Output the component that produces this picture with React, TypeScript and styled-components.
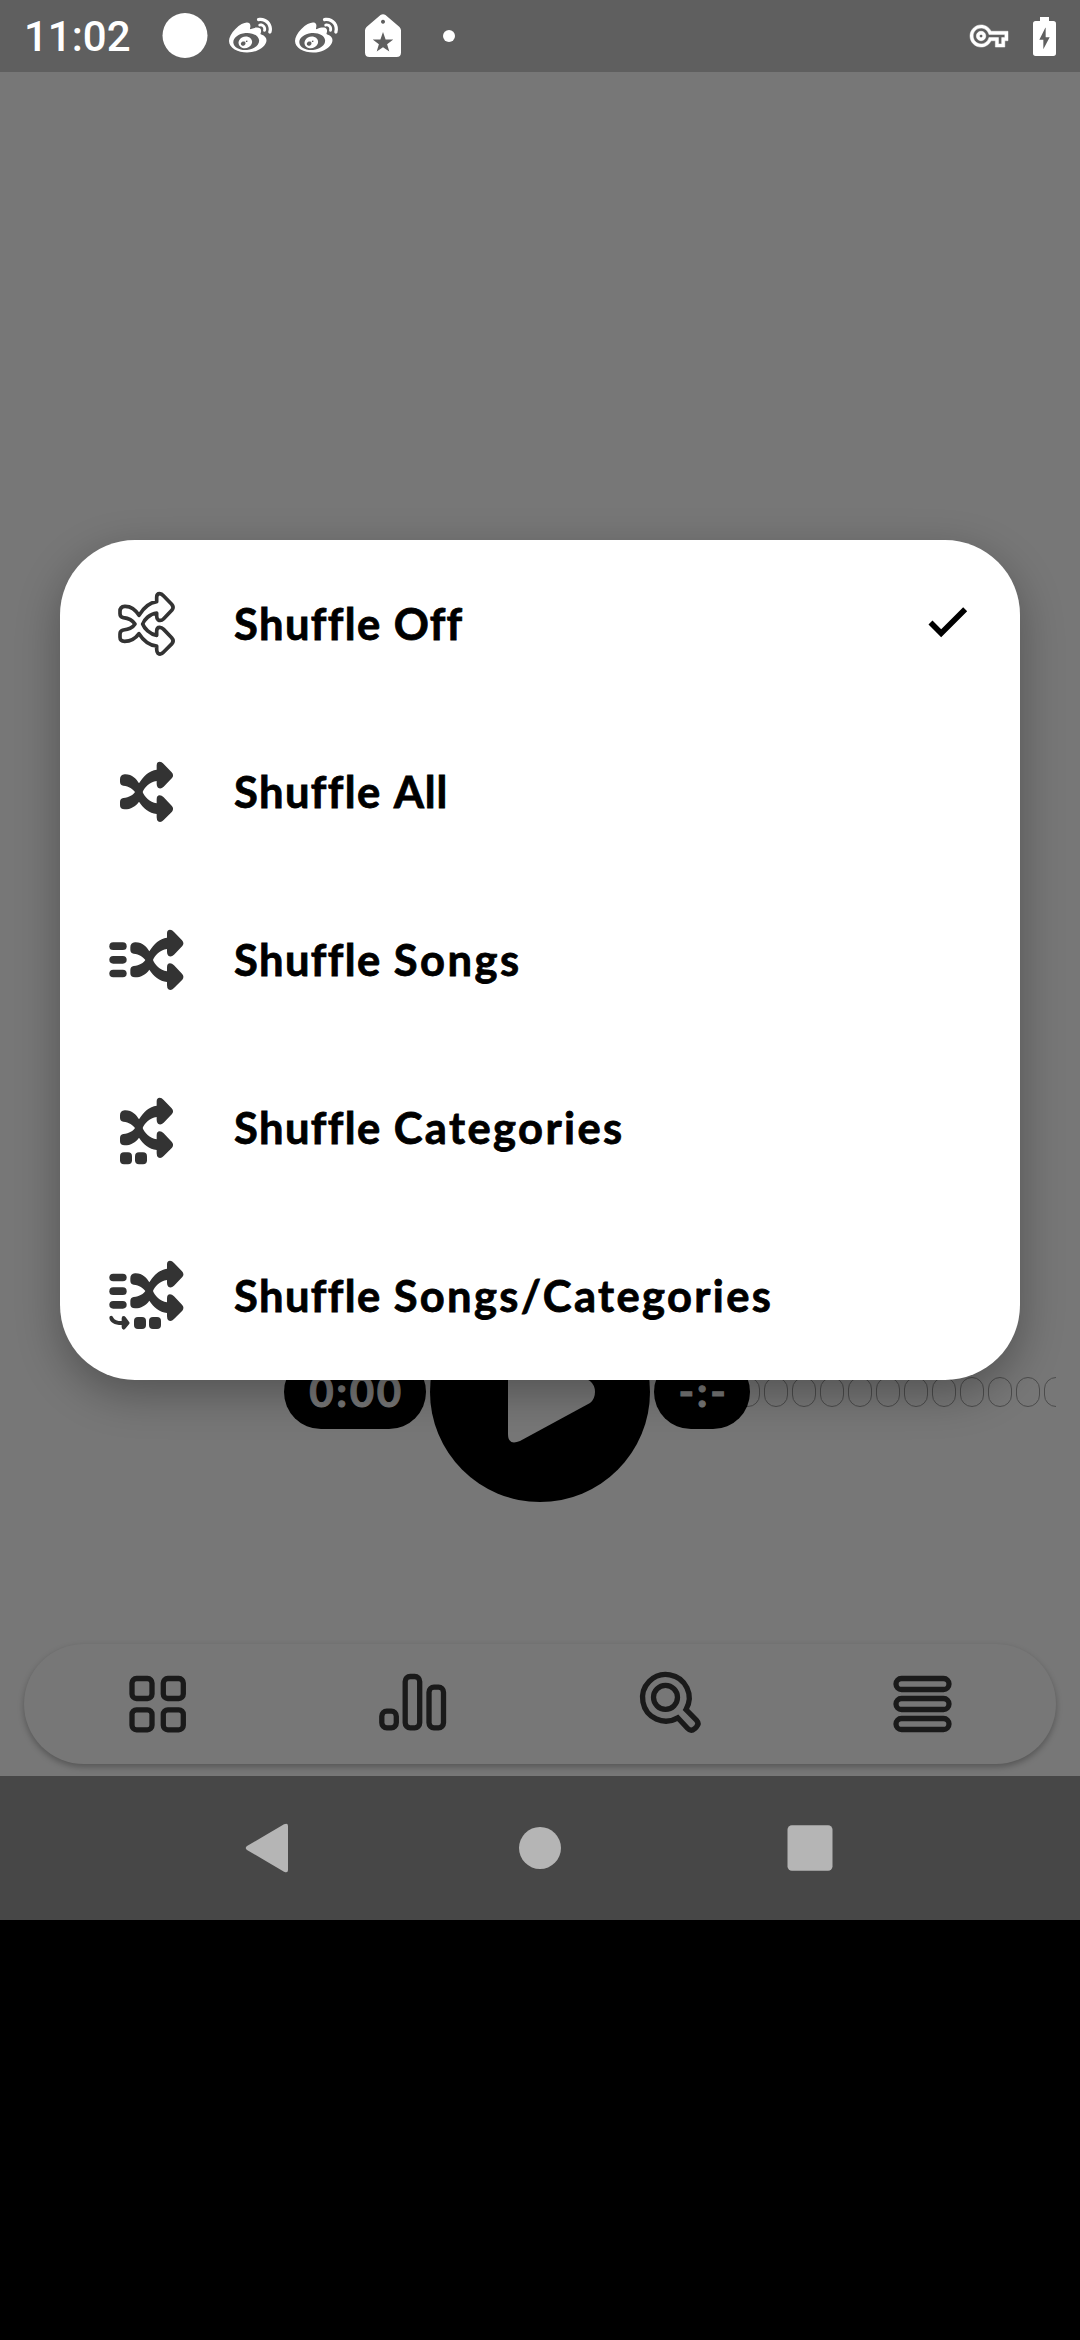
import React from "react";
import styled, { createGlobalStyle } from "styled-components";
import { FaWeibo } from "react-icons/fa";

const GlobalStyle = createGlobalStyle`
  * { box-sizing: border-box; }
  body { margin: 0; background: #000; }
  svg { display: block; flex: none; overflow: visible; }
`;

const Screen = styled.div`
  position: relative;
  display: flex;
  flex-direction: column;
  width: 1080px;
  height: 2340px;
  overflow: hidden;
  background: #000;
  font-family: Lato, "Open Sans", sans-serif;
`;

const StatusBar = styled.header`
  display: flex;
  align-items: center;
  height: 72px;
  padding: 0 24px;
  background: #5f5f5f;
  color: #fff;
`;

const Clock = styled.span`
  width: 127.5px;
  font: 500 42px/72px Roboto, sans-serif;
  padding-top: 2px;
`;

const StatusSlot = styled.span`
  display: flex;
  justify-content: center;
  width: 66px;
`;

const StatusRight = styled.div`
  display: flex;
  align-items: center;
  gap: 25px;
  margin-left: auto;
`;

const AppArea = styled.main`
  display: flex;
  flex-direction: column;
  justify-content: flex-end;
  height: 1704px;
  padding: 0 24px 12px;
  background: #777;
`;

const PlayerRow = styled.section`
  display: flex;
  align-items: center;
  gap: 4px;
  height: 220px;
  margin: 0 0 142px;
  padding-left: 260px;
  overflow: hidden;
`;

const TimePill = styled.span<{ $width: number }>`
  position: relative;
  z-index: 1;
  display: flex;
  flex: none;
  align-items: center;
  justify-content: center;
  width: ${(p) => p.$width}px;
  height: 74px;
  padding-left: 3px;
  padding-bottom: 2px;
  border-radius: 37px;
  background: #000;
  color: #777;
  font-size: 42px;
  font-weight: 700;
  letter-spacing: 2.6px;
  line-height: 72px;
  -webkit-text-stroke: 1px #777;
`;

const PlayButton = styled.button`
  display: flex;
  flex: none;
  align-items: center;
  justify-content: center;
  width: 220px;
  height: 220px;
  padding: 0;
  border: 0;
  border-radius: 50%;
  background: #000;
`;

const Waveform = styled.div`
  display: flex;
  flex: none;
  gap: 4px;
  width: 320px;
  margin-left: -18px;
  overflow: hidden;
`;

const WaveBead = styled.i`
  flex: none;
  width: 24px;
  height: 30px;
  border: 1px solid #4c4c4c;
  border-radius: 12px;
`;

const TabBar = styled.nav`
  display: flex;
  align-items: center;
  height: 120px;
  padding: 0 6px;
  border-radius: 60px;
  background: #777;
  box-shadow: 0 3px 6px rgba(0, 0, 0, 0.28);
`;

const Tab = styled.span`
  display: flex;
  flex: 1;
  justify-content: center;
`;

const SystemNav = styled.footer`
  display: flex;
  align-items: center;
  height: 144px;
  padding: 0 135px;
  background: #474747;
`;

const Scrim = styled.div`
  position: absolute;
  inset: 0;
  z-index: 2;
  padding: 540px 60px 0;
`;

const Dialog = styled.ul`
  margin: 0;
  padding: 0;
  list-style: none;
  border-radius: 75px;
  background: #fff;
  box-shadow: 0 14px 44px rgba(0, 0, 0, 0.3);
`;

const Option = styled.li`
  display: flex;
  align-items: center;
  height: 168px;
  padding: 0 42px 0 45px;
`;

const OptionLabel = styled.span`
  flex: 1;
  margin-left: 45px;
  padding-bottom: 3px;
  color: #000;
  font-size: 43.5px;
  font-weight: 700;
  letter-spacing: 1.4px;
  line-height: 60px;
  white-space: nowrap;
  -webkit-text-stroke: 0.8px #000;
`;

const Mode = styled.span<{ $spacing: number }>`
  letter-spacing: ${(p) => p.$spacing}px;
`;

const ARROWS =
  "M240 748Q240 734 254 733C276 732 289 747 297 760C311 737 328 722 350 719V706Q350 695 359 695Q365 695 371 702L395 727Q403 736 396 744L371 770Q362 779 354 773Q350 769 350 762V753C329 755 312 774 308 786C313 799 329 817 350 820V808Q350 796 359 796Q365 796 371 802L395 827Q403 836 396 845L371 870Q362 880 354 874Q350 870 350 862V852C328 850 309 834 297 815C287 829 272 838 254 838Q240 838 240 826V816Q240 806 250 804C268 802 280 794 285 786C279 777 267 769 250 767Q240 765 240 755Z";

type IconProps = {
  outline?: boolean;
  lines?: boolean;
  dots?: boolean;
};

function ShuffleIcon({ outline, lines, dots }: IconProps) {
  const dx = lines ? 31 : 0;
  const dy = lines && dots ? -15 : 0;
  const dotX = lines ? 282 : 240;
  const dotY = lines ? 849 : 859;
  return (
    <svg width="84" height="84" viewBox="195 660 252 252" fill="#333">
      <path
        d={ARROWS}
        transform={`translate(${dx} ${dy})`}
        fill={outline ? "none" : "#333"}
        stroke={outline ? "#333" : "none"}
        strokeWidth="11"
        strokeLinejoin="round"
      />
      {lines &&
        [733, 774, 815].map((y) => (
          <rect key={y} x="208" y={y + (dots ? -14 : 0)} width="52" height="23" rx="11.5" />
        ))}
      {dots && <rect x={dotX} y={dotY} width="36" height="36" rx="12" />}
      {dots && <rect x={dotX + 45} y={dotY} width="36" height="36" rx="12" />}
      {lines && dots && (
        <path d="M208 851Q208 845 214 845Q219 846 220 851Q225 861 245 861V853Q245 846 251 846Q254 846 257 850L267 863Q271 867 267 871L257 883Q254 887 251 887Q245 886 245 880V873C223 873 209 864 208 851Z" />
      )}
    </svg>
  );
}

function CheckIcon() {
  return (
    <svg width="60" height="60" viewBox="174 222 180 180">
      <path d="M211.500 307.500L243.500 339.500L315.500 267.500" fill="none" stroke="#000" strokeWidth="17" />
    </svg>
  );
}

const OPTIONS = [
  { mode: "Off", icon: { outline: true }, spacing: 1.2, checked: true },
  { mode: "All", icon: {}, spacing: 1 },
  { mode: "Songs", icon: { lines: true }, spacing: 2.5 },
  { mode: "Categories", icon: { dots: true }, spacing: 2.4 },
  { mode: "Songs/Categories", icon: { lines: true, dots: true }, spacing: 2.35 },
];

const tabIcon = {
  width: 72,
  height: 72,
  viewBox: "0 0 72 72",
  fill: "none",
  stroke: "#1a1a1a",
  strokeWidth: 5.3,
};

export default function App() {
  return (
    <Screen>
      <GlobalStyle />
      <StatusBar>
        <Clock>11:02</Clock>
        <StatusSlot>
          <svg width="46" height="46" viewBox="0 0 46 46">
            <circle cx="23" cy="22.500" r="22.500" fill="#fff" />
          </svg>
        </StatusSlot>
        <StatusSlot>
          <FaWeibo size={43} />
        </StatusSlot>
        <StatusSlot>
          <FaWeibo size={43} />
        </StatusSlot>
        <StatusSlot>
          <svg width="36" height="44" viewBox="0 0 36 44">
            <path
              fill="#fff"
              fillRule="evenodd"
              d="M15.500 1Q18 -.6 20.500 1L34.500 13Q36 14.500 36 16.500V38.500Q36 43 31.500 43H4.500Q0 43 0 38.500V16.500Q0 14.500 1.500 13ZM18 5.800a2 2 0 1 0 .01 0ZM18 18l2.600 7.400 7.700.1-6.200 4.700 2.200 7.400L18 33.200l-6.300 4.400 2.200-7.400-6.200-4.700 7.700-.1Z"
            />
          </svg>
        </StatusSlot>
        <StatusSlot>
          <svg width="12" height="12" viewBox="0 0 12 12">
            <circle cx="6" cy="6" r="6" fill="#fff" />
          </svg>
        </StatusSlot>
        <StatusRight>
          <svg width="38" height="38" viewBox="0 0 24 24">
            <path
              fill="#fff"
              stroke="#fff"
              strokeWidth="0.3"
              d="M22 19h-6v-4h-2.680c-1.140 2.420-3.600 4-6.320 4-3.860 0-7-3.140-7-7s3.140-7 7-7c2.720 0 5.170 1.580 6.320 4H24v6h-2v4zm-4-2h2v-4h2v-2H11.940l-.23-.67C11.010 8.340 9.110 7 7 7c-2.760 0-5 2.240-5 5s2.240 5 5 5c2.110 0 4.010-1.340 4.710-3.330l.23-.67H18v4zM7 15c-1.650 0-3-1.350-3-3s1.350-3 3-3 3 1.350 3 3-1.350 3-3 3zm0-4c-.55 0-1 .45-1 1s.45 1 1 1 1-.45 1-1-.45-1-1-1z"
            />
          </svg>
          <svg width="23" height="39" viewBox="0 0 69 117">
            <path
              fill="#fff"
              fillRule="evenodd"
              d="M21 0H48V12H61Q69 12 69 20V109Q69 117 61 117H8Q0 117 0 109V20Q0 12 8 12H21ZM37 32L19 68H31V97L50 61H38V32Z"
            />
          </svg>
        </StatusRight>
      </StatusBar>

      <AppArea>
        <PlayerRow>
          <TimePill $width={142}>0:00</TimePill>
          <PlayButton aria-label="Play">
            <svg width="100" height="104" viewBox="0 0 100 104">
              <path
                fill="#777"
                d="M18 10V94Q18 106 30 101L100 63Q105 59 105 52Q105 45 100 41L30 3Q18 -2 18 10Z"
              />
            </svg>
          </PlayButton>
          <TimePill $width={96}>-:-</TimePill>
          <Waveform>
            {Array.from({ length: 12 }, (_, i) => (
              <WaveBead key={i} />
            ))}
          </Waveform>
        </PlayerRow>

        <TabBar>
          <Tab>
            <svg {...tabIcon}>
              <rect x="10" y="10.500" width="20" height="20" rx="4.500" />
              <rect x="41.300" y="10.500" width="20" height="20" rx="4.500" />
              <rect x="10" y="41.800" width="20" height="20" rx="4.500" />
              <rect x="41.300" y="41.800" width="20" height="20" rx="4.500" />
            </svg>
          </Tab>
          <Tab>
            <svg {...tabIcon}>
              <rect x="4.800" y="43.200" width="14.500" height="16.600" rx="5" />
              <rect x="28.200" y="8.500" width="14.500" height="51.300" rx="5" />
              <rect x="52" y="19.200" width="14.500" height="40.600" rx="5" />
            </svg>
          </Tab>
          <Tab>
            <svg {...tabIcon}>
              <path d="M54 41.500A23.300 23.300 0 1 0 45.800 49.800L55.500 60.300Q59 64 62.500 60.800L64.500 58.800Q67.500 55.500 64.500 52.300Z" />
              <circle cx="33.500" cy="29.300" r="12" />
            </svg>
          </Tab>
          <Tab>
            <svg {...tabIcon}>
              <rect x="9" y="10.500" width="53" height="11" rx="5.500" />
              <rect x="9" y="30.500" width="53" height="11" rx="5.500" />
              <rect x="9" y="50.500" width="53" height="11" rx="5.500" />
            </svg>
          </Tab>
        </TabBar>
      </AppArea>

      <SystemNav>
        <Tab>
          <svg width="60" height="60" viewBox="0 0 60 60">
            <path fill="#b5b5b5" d="M7 28L44 6.300Q48 4.500 48 8V52Q48 55.500 44 53.700L7 32Q4.500 30 7 28Z" />
          </svg>
        </Tab>
        <Tab>
          <svg width="60" height="60" viewBox="0 0 60 60">
            <circle cx="30" cy="30" r="21" fill="#b5b5b5" />
          </svg>
        </Tab>
        <Tab>
          <svg width="60" height="60" viewBox="0 0 60 60">
            <rect x="7.500" y="7.200" width="45" height="45.600" rx="4.500" fill="#b5b5b5" />
          </svg>
        </Tab>
      </SystemNav>

      <Scrim>
        <Dialog>
          {OPTIONS.map((o) => (
            <Option key={o.mode}>
              <ShuffleIcon {...o.icon} />
              <OptionLabel>
                Shuffle <Mode $spacing={o.spacing}>{o.mode}</Mode>
              </OptionLabel>
              {o.checked && <CheckIcon />}
            </Option>
          ))}
        </Dialog>
      </Scrim>
    </Screen>
  );
}
